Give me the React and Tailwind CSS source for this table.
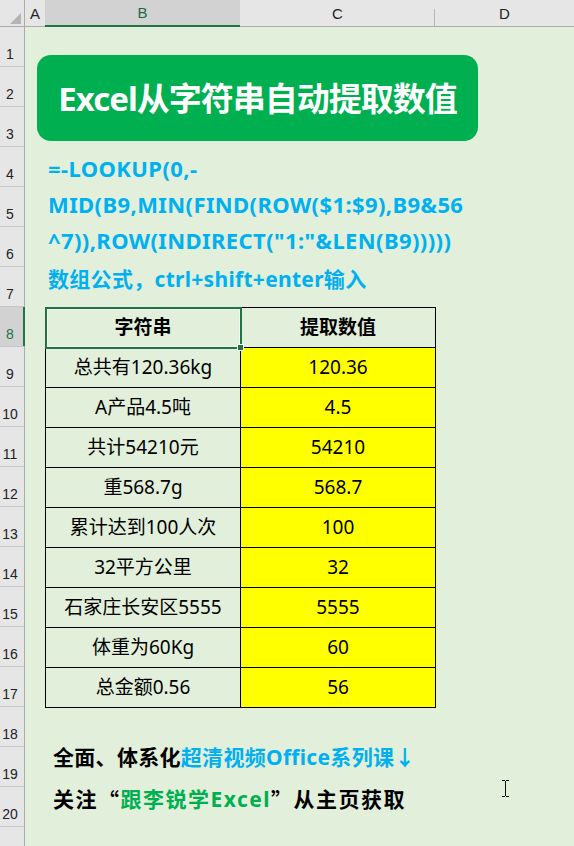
import React from "react";

const rows = [
  ["总共有120.36kg", "120.36"],
  ["A产品4.5吨", "4.5"],
  ["共计54210元", "54210"],
  ["重568.7g", "568.7"],
  ["累计达到100人次", "100"],
  ["32平方公里", "32"],
  ["石家庄长安区5555", "5555"],
  ["体重为60Kg", "60"],
  ["总金额0.56", "56"],
];

const rowNums = Array.from({ length: 21 }, (_, i) => i + 1);

const cjk = { fontFamily: '"Noto Sans", "Noto Sans CJK SC", sans-serif' };
const cjkOnly = { fontFamily: '"Noto Sans CJK SC", sans-serif' };
const hdr = { fontFamily: '"Liberation Sans", Arial, sans-serif' };

export default function App() {
  return (
    <div className="w-[574px] h-[846px] overflow-hidden bg-[#e2efda] relative" style={cjk}>
      {/* Column header row */}
      <div className="flex h-[27px] bg-[#e6e6e6] border-b border-[#ababab] text-[15px] text-[#222]" style={hdr}>
        <div className="w-[25px] shrink-0 border-r border-[#ababab] relative">
          <svg className="absolute left-[10px] top-[13px]" width="11" height="11" viewBox="0 0 11 11">
            <polygon points="11,0 11,11 0,11" fill="#b4b4b4" />
          </svg>
        </div>
        <div className="w-[20px] shrink-0 flex items-end justify-center pb-[1px]">A</div>
        <div className="w-[195px] shrink-0 bg-[#d2d2d2] flex items-end justify-center pb-[1px] text-[#1e6b40] border-b-2 border-[#217346] -mb-[1px]">B</div>
        <div className="w-[195px] shrink-0 flex items-end justify-center pb-[1px] relative">
          C
          <div className="absolute right-0 top-[9px] bottom-0 w-px bg-[#b8b8b8]" />
        </div>
        <div className="flex-1 flex items-end justify-center pb-[1px]">D</div>
      </div>

      <div className="flex">
        {/* Row headers */}
        <div className="w-[25px] shrink-0 bg-[#e6e6e6] border-r border-[#ababab] text-[14px] text-[#222]" style={hdr}>
          {rowNums.map((n) => (
            <div
              key={n}
              className={
                n === 8
                  ? "h-[40px] border-b border-[#c6c6c6] bg-[#d2d2d2] text-[#217346] flex items-end justify-center pr-[4px] pb-[1px] relative"
                  : "h-[40px] border-b border-[#c6c6c6] flex items-end justify-center pr-[4px] pb-[1px]"
              }
            >
              {n < 21 ? n : ""}
              {n === 8 && <div className="absolute right-[-1px] top-0 bottom-0 w-[2px] bg-[#217346]" />}
            </div>
          ))}
        </div>

        {/* Sheet content */}
        <div className="flex-1 flex flex-col">
          <div className="pt-[28px] pl-[12px]">
            <div className="w-[441px] h-[86px] rounded-[14px] bg-[#00b050] flex items-center justify-center text-white font-bold text-[33px] leading-none tracking-[-1px] pt-[1px]">
              Excel从字符串自动提取数值
            </div>
          </div>

          <div className="mt-[9px] pl-[23px] text-[#00b0f0] font-bold text-[22px] leading-[36px] whitespace-nowrap">
            <div className="tracking-[0.4px]">=-LOOKUP(0,-</div>
            <div className="tracking-[0.4px]">MID(B9,MIN(FIND(ROW($1:$9),B9&amp;56</div>
            <div className="tracking-[0.4px]">^7)),ROW(INDIRECT("1:"&amp;LEN(B9)))))</div>
            <div className="mt-[3px] text-[21px] tracking-[0.3px]">数组公式，ctrl+shift+enter输入</div>
          </div>

          <div className="mt-[10px] ml-[20px] w-[391px] border-l border-t border-black relative">
            <div className="grid grid-cols-[195px_195px]">
              <div className="h-[40px] border-r border-b border-black flex items-center justify-center font-bold text-[19px] text-black">
                字符串
              </div>
              <div className="h-[40px] border-r border-b border-black flex items-center justify-center font-bold text-[19px] text-black">
                提取数值
              </div>
              {rows.map(([a, b]) => (
                <React.Fragment key={a}>
                  <div className="h-[40px] border-r border-b border-black flex items-center justify-center text-[19px] text-black">
                    {a}
                  </div>
                  <div className="h-[40px] border-r border-b border-black bg-[#ffff00] flex items-center justify-center text-[19px] text-black">
                    {b}
                  </div>
                </React.Fragment>
              ))}
            </div>
            {/* selection on B8 */}
            <div className="absolute left-[-1px] top-[-1px] w-[197px] h-[42px] border-2 border-[#217346] pointer-events-none">
              <div className="absolute inset-0 border border-white/70" />
            </div>
            <div className="absolute left-[191px] top-[36px] w-[7px] h-[7px] bg-[#217346] border border-white" />
          </div>

          <div className="mt-[29px] pl-[28px] font-bold text-[21px] whitespace-nowrap">
            <div className="h-[42px] flex items-center text-black tracking-[0.3px]">
              全面、体系化<span className="text-[#00b0f0]">超清视频Office系列课↓</span>
            </div>
            <div className="h-[42px] flex items-center text-black tracking-[1.5px]">
              关注<span style={cjkOnly}>“</span>
              <span className="text-[#00b050]">跟李锐学Excel</span>
              <span style={cjkOnly}>”</span>从主页获取
            </div>
          </div>
        </div>
      </div>

      {/* I-beam cursor */}
      <svg className="absolute left-[501px] top-[780px]" width="9" height="17" viewBox="0 0 9 17">
        <path d="M1 0.5H4M5 0.5H8M4.5 1V16M1 16.5H4M5 16.5H8" stroke="#111" strokeWidth="1" fill="none" />
      </svg>
    </div>
  );
}
